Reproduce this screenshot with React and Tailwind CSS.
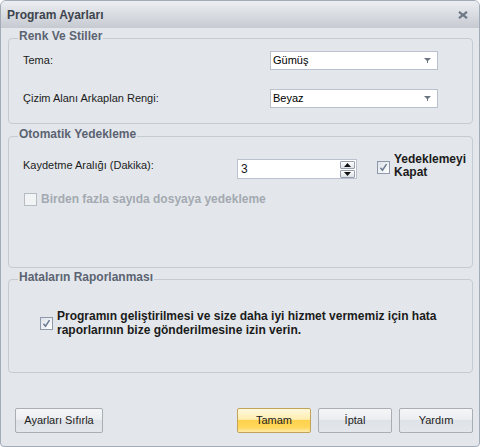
import React from "react";

function Arrow() {
  return (
    <svg width="7" height="5" viewBox="0 0 7 5">
      <path d="M0 0h7L3.5 3.5z" fill="#6b7480" />
      <rect x="3" y="3" width="1" height="2" fill="#6b7480" />
    </svg>
  );
}

function Combo({ value }) {
  return (
    <div className="w-[168px] h-[19px] bg-white border border-[#b9c1cf] flex items-center justify-between pl-[2px] pr-[6px]">
      <span className="text-[11px] leading-none text-black">{value}</span>
      <Arrow />
    </div>
  );
}

function Check({ checked, disabled }) {
  return (
    <span
      className={
        disabled
          ? "w-[13px] h-[13px] shrink-0 border border-[#b7bcc3] bg-[#f2f3f5] flex items-center justify-center"
          : "w-[13px] h-[13px] shrink-0 border border-[#8e9aab] bg-gradient-to-br from-[#dde2e8] to-white flex items-center justify-center"
      }
    >
      {checked && (
        <svg width="9" height="9" viewBox="0 0 9 9">
          <path d="M1.5 4.8l2 2.4 4-6" stroke="#6a7a92" strokeWidth="1.5" fill="none" />
        </svg>
      )}
    </span>
  );
}

function Group({ title, className, children }) {
  return (
    <fieldset className={"w-[465px] border border-[#c5cbd3] rounded-[4px] " + className}>
      <legend className="ml-[9px] px-[1px] pb-[4px] text-[12px] leading-[14px] font-bold text-[#5b6372]">
        {title}
      </legend>
      {children}
    </fieldset>
  );
}

function Btn({ children, primary, w }) {
  return (
    <button
      className={
        (primary
          ? "bg-[linear-gradient(to_bottom,#fff8dc_0%,#ffeeb0_45%,#ffd24e_50%,#ffd75c_80%,#ffeaa8_100%)] border-[#c2a35a] "
          : "bg-[linear-gradient(to_bottom,#f4f6f8_0%,#eceef1_45%,#dfe2e7_50%,#e3e6ea_100%)] border-[#a9aeb5] ") +
        w +
        " h-[25px] border rounded-[2px] text-[11px] text-[#1c1c1c] flex items-center justify-center"
      }
    >
      {children}
    </button>
  );
}

export default function App() {
  return (
    <div className="w-[480px] h-[447px] bg-[#e3e7eb] border border-[#a3abb6] rounded-t-[6px] rounded-b-[4px] overflow-hidden flex flex-col font-['Liberation_Sans',Arial,sans-serif] text-[11px] text-[#1b1b1b]">
      <div className="h-[27px] shrink-0 flex items-center justify-between pl-[6px] pr-[11px] bg-gradient-to-b from-[#eceef2] to-[#c6cad1]">
        <span className="text-[12px] font-bold text-[#3e444d]">Program Ayarları</span>
        <svg width="10" height="8" viewBox="0 0 10 8">
          <path d="M1 0.8l8 6.4M9 0.8L1 7.2" stroke="#6f7987" strokeWidth="2.2" />
        </svg>
      </div>

      <div className="pl-[7px] flex flex-col">
        <Group title="Renk Ve Stiller" className="h-[95px] mt-[1px]">
          <div className="flex items-center mt-[4px] pl-[14px]">
            <span className="w-[247px]">Tema:</span>
            <Combo value="Gümüş" />
          </div>
          <div className="flex items-center mt-[19px] pl-[14px]">
            <span className="w-[247px]">Çizim Alanı Arkaplan Rengi:</span>
            <Combo value="Beyaz" />
          </div>
        </Group>

        <Group title="Otomatik Yedekleme" className="h-[141px] mt-[3px]">
          <div className="flex items-start mt-[8px] pl-[14px]">
            <span className="w-[214px] mt-[5px] leading-[14px]">Kaydetme Aralığı (Dakika):</span>
            <div className="mt-[6px] w-[120px] h-[20px] bg-white border border-[#b9c1cf] flex items-center justify-between pl-[3px] pr-[1px]">
              <span className="leading-none text-[12px]">3</span>
              <div className="flex flex-col gap-[1px]">
                <span className="w-[15px] h-[8px] border border-[#97a0ac] rounded-[1px] bg-gradient-to-b from-white to-[#dde1e6] flex items-center justify-center">
                  <svg width="7" height="4" viewBox="0 0 7 4"><path d="M3.5 0L7 4H0z" fill="#111" /></svg>
                </span>
                <span className="w-[15px] h-[8px] border border-[#97a0ac] rounded-[1px] bg-gradient-to-b from-white to-[#dde1e6] flex items-center justify-center">
                  <svg width="7" height="4" viewBox="0 0 7 4"><path d="M0 0h7L3.5 4z" fill="#111" /></svg>
                </span>
              </div>
            </div>
            <span className="ml-[20px] mt-[8px]">
              <Check checked />
            </span>
            <span className="ml-[4px] font-bold leading-[13px] text-[12px]">
              Yedeklemeyi
              <br />
              Kapat
            </span>
          </div>
          <div className="flex items-center mt-[13px] pl-[15px]">
            <Check disabled />
            <span className="ml-[4px] font-bold text-[12px] text-[#a4a9b1] leading-[14px]">
              Birden fazla sayıda dosyaya yedekleme
            </span>
          </div>
        </Group>

        <Group title="Hataların Raporlanması" className="h-[103px] mt-[2px]">
          <div className="flex items-center mt-[21px] pl-[31px]">
            <Check checked />
            <span className="ml-[4px] font-bold text-[12px] leading-[14px]">
              Programın geliştirilmesi ve size daha iyi hizmet vermemiz için hata
              <br />
              raporlarının bize gönderilmesine izin verin.
            </span>
          </div>
        </Group>

        <div className="w-[465px] flex justify-between mt-[35px] pl-[7px]">
          <Btn w="w-[88px]">Ayarları Sıfırla</Btn>
          <div className="flex gap-[7px]">
            <Btn w="w-[74px]" primary>
              Tamam
            </Btn>
            <Btn w="w-[74px]">İptal</Btn>
            <Btn w="w-[74px]">Yardım</Btn>
          </div>
        </div>
      </div>
    </div>
  );
}
